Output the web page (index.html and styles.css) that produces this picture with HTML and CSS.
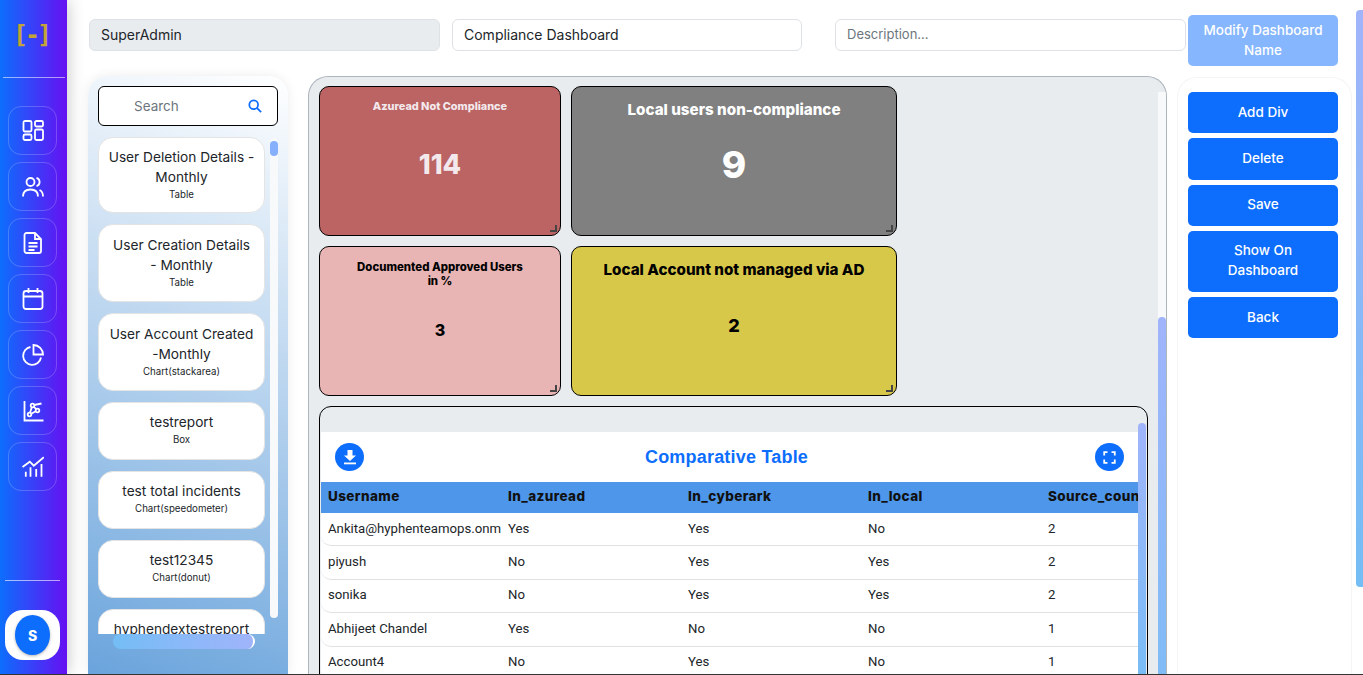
FILE: index.html
```html
<!DOCTYPE html>
<html lang="en">
<head>
    <meta charset="UTF-8">
    <meta name="viewport" content="width=device-width, initial-scale=1.0">
    <title>Compliance Dashboard</title>
    <link rel="stylesheet" href="styles.css">
</head>
<body>

    <!-- sidebar -->
    <aside class="sidebar">
        <div class="logo">[-]</div>
        <hr class="side-line">
        <nav class="nav-list">
            <a class="nav-item"><svg class="nav-icon" viewBox="0 0 22 22"><rect x="1.500" y="1" width="8" height="10.500" rx="1.500"/><rect x="1.500" y="14.500" width="8" height="5.500" rx="1.500"/><rect x="13" y="1" width="8" height="5.500" rx="1.500"/><rect x="13" y="9.500" width="8" height="10.500" rx="1.500"/></svg></a>
            <a class="nav-item"><svg class="nav-icon" viewBox="0 0 22 22"><circle cx="8.500" cy="6" r="4"/><path d="M1 20.500c0-4.500 3-7 7.500-7s7.500 2.500 7.500 7"/><path d="M14.500 1.800a4.400 4.400 0 0 1 0 8.400"/><path d="M17.500 14c2.300 1 3.500 3.200 3.500 6.500"/></svg></a>
            <a class="nav-item"><svg class="nav-icon" viewBox="0 0 22 22"><path d="M4.500 1h8.500l6 6v12a2 2 0 0 1-2 2H4.500a2 2 0 0 1-2-2V3a2 2 0 0 1 2-2z"/><path d="M13 1v6h6"/><path d="M6.500 11h9M6.500 14.500h9M6.500 18h6"/></svg></a>
            <a class="nav-item"><svg class="nav-icon" viewBox="0 0 22 22"><rect x="1.500" y="3" width="19" height="18" rx="2.500"/><path d="M1.500 8.500h19M6.500 0v5M15.500 0v5"/></svg></a>
            <a class="nav-item"><svg class="nav-icon" viewBox="0 0 22 22"><path d="M8.500 3a9 9 0 1 0 10.500 10.500"/><path d="M11.500 1a9.500 9.500 0 0 1 9.500 9.500h-9.500z"/></svg></a>
            <a class="nav-item"><svg class="nav-icon" viewBox="0 0 22 22"><path d="M2.500 1v19.500h19"/><circle cx="7.500" cy="14.500" r="1.800"/><circle cx="15.500" cy="10.500" r="1.800"/><circle cx="10.500" cy="5.500" r="1.800"/><path d="M9.200 13.700l4.600-2.400M12.200 5l7.300-1.500M11.800 6.800l2.500 2.400M8 12.800l1.800-5.500"/></svg></a>
            <a class="nav-item"><svg class="nav-icon" viewBox="0 0 22 22"><path d="M0.500 11l7.300-5.300 4 4L21.800 1.300"/><path d="M3.800 15.700v5M8.500 11.300v9.400M14.200 13v7.700M19.500 8v12.700"/></svg></a>
        </nav>
        <hr class="side-line user-line">
        <div class="user-box">
            <div class="user-avatar">S</div>
        </div>
    </aside>

    <main class="main">
        <div class="top-row">
            <div class="field field-disabled">SuperAdmin</div>
            <div class="field field-name">Compliance Dashboard</div>
            <div class="field field-desc">Description...</div>
            <button class="btn btn-faded">Modify Dashboard Name</button>
        </div>

        <div class="content-row">
            <!-- report list -->
            <section class="report-panel">
                <div class="search-box">
                    <span class="search-text">Search</span>
                    <svg class="search-icon" viewBox="0 0 16 16"><circle cx="6.500" cy="6.500" r="5"/><path d="M10.300 10.300L15 15"/></svg>
                </div>
                <div class="report-list">
                    <div class="report-card">
                        <div class="report-title">User Deletion Details -<br>Monthly</div>
                        <div class="report-type">Table</div>
                    </div>
                    <div class="report-card tall">
                        <div class="report-title">User Creation Details<br>- Monthly</div>
                        <div class="report-type">Table</div>
                    </div>
                    <div class="report-card tall">
                        <div class="report-title">User Account Created<br>-Monthly</div>
                        <div class="report-type">Chart(stackarea)</div>
                    </div>
                    <div class="report-card">
                        <div class="report-title">testreport</div>
                        <div class="report-type">Box</div>
                    </div>
                    <div class="report-card">
                        <div class="report-title">test total incidents</div>
                        <div class="report-type">Chart(speedometer)</div>
                    </div>
                    <div class="report-card">
                        <div class="report-title">test12345</div>
                        <div class="report-type">Chart(donut)</div>
                    </div>
                    <div class="report-card">
                        <div class="report-title">hyphendextestreport</div>
                        <div class="report-type">Box</div>
                    </div>
                </div>
                <div class="list-track"><div class="list-thumb"></div></div>
                <div class="list-hthumb"></div>
            </section>

            <!-- canvas -->
            <section class="canvas">
                <div class="box-grid">
                    <div class="box box-red">
                        <div class="box-title t-small">Azuread Not Compliance</div>
                        <div class="box-value v-114">114</div>
                    </div>
                    <div class="box box-grey">
                        <div class="box-title t-large">Local users non-compliance</div>
                        <div class="box-value v-9">9</div>
                    </div>
                    <div class="box box-pink">
                        <div class="box-title t-two">Documented Approved Users<br>in %</div>
                        <div class="box-value v-3">3</div>
                    </div>
                    <div class="box box-yellow">
                        <div class="box-title t-mid">Local Account not managed via AD</div>
                        <div class="box-value v-2">2</div>
                    </div>
                </div>

                <div class="table-box">
                    <div class="table-inner">
                        <div class="table-head">
                            <span class="round-btn">
                                <svg viewBox="0 0 16 16"><path class="solid" d="M5.500 1h5v5.500h3.500L8 12 2 6.500h3.500z"/><rect class="solid" x="2" y="13.500" width="12" height="1.800"/></svg>
                            </span>
                            <h2 class="table-title">Comparative Table</h2>
                            <span class="round-btn">
                                <svg class="expand" viewBox="0 0 16 16"><path class="corner" d="M1.500 5.500v-4h4M10.500 1.500h4v4M14.500 10.500v4h-4M5.500 14.500h-4v-4"/></svg>
                            </span>
                        </div>
                        <table class="data-table">
                            <thead>
                                <tr><th>Username</th><th>In_azuread</th><th>In_cyberark</th><th>In_local</th><th>Source_count</th></tr>
                            </thead>
                            <tbody>
                                <tr><td>Ankita@hyphenteamops.onmicrosoft.com</td><td>Yes</td><td>Yes</td><td>No</td><td>2</td></tr>
                                <tr><td>piyush</td><td>No</td><td>Yes</td><td>Yes</td><td>2</td></tr>
                                <tr><td>sonika</td><td>No</td><td>Yes</td><td>Yes</td><td>2</td></tr>
                                <tr><td>Abhijeet Chandel</td><td>Yes</td><td>No</td><td>No</td><td>1</td></tr>
                                <tr><td>Account4</td><td>No</td><td>Yes</td><td>No</td><td>1</td></tr>
                            </tbody>
                        </table>
                    </div>
                    <div class="table-thumb"></div>
                </div>

                <div class="canvas-track"><div class="canvas-thumb"></div></div>
            </section>

            <!-- actions -->
            <section class="action-panel">
                <button class="btn">Add Div</button>
                <button class="btn">Delete</button>
                <button class="btn">Save</button>
                <button class="btn btn-two">Show On Dashboard</button>
                <button class="btn">Back</button>
            </section>
        </div>
    </main>

    <div class="page-thumb"></div>

</body>
</html>
```

FILE: styles.css
```css
* {
    box-sizing: border-box;
}

html, body {
    height: 100%;
    margin: 0;
    overflow: hidden;
}

body {
    display: flex;
    height: 675px;
    background-color: #fff;
    border-bottom: 1px solid #333;
    font-family: "Inter", "Open Sans", sans-serif;
    color: #212529;
}

/* sidebar */
.sidebar {
    width: 67px;
    flex-shrink: 0;
    display: flex;
    flex-direction: column;
    align-items: center;
    background: linear-gradient(to right, #0d6efd, #6610f2);
    box-shadow: 0 0 16px rgba(0, 0, 0, 0.25);
    z-index: 5;
}

.logo {
    height: 77px;
    margin-right: 5px;
    padding-top: 20px;
    font-family: "DejaVu Sans Mono", monospace;
    font-size: 25px;
    line-height: 30px;
    font-weight: bold;
    letter-spacing: -3px;
    color: #c2a437;
}

.side-line {
    width: 62px;
    height: 1px;
    margin: 0;
    border: none;
    background-color: rgba(255, 255, 255, 0.55);
}

.nav-list {
    display: flex;
    flex-direction: column;
    gap: 7px;
    margin: 28px 2px 0 0;
}

.nav-item {
    display: flex;
    justify-content: center;
    align-items: center;
    width: 49px;
    height: 49px;
    border: 1px solid rgba(255, 255, 255, 0.2);
    border-radius: 13px;
}

.nav-icon {
    width: 22px;
    height: 22px;
    fill: none;
    stroke: #fff;
    stroke-width: 1.800;
}

.user-line {
    width: 55px;
    margin: auto 2px 0 0;
    background-color: rgba(255, 255, 255, 0.6);
}

.user-box {
    display: flex;
    justify-content: center;
    align-items: center;
    width: 55px;
    height: 50px;
    margin: 29px 2px 14px 0;
    background-color: #fff;
    border-radius: 18px;
}

.user-avatar {
    display: flex;
    justify-content: center;
    align-items: center;
    width: 35px;
    height: 40px;
    border-radius: 50%;
    background-color: #0d6efd;
    color: #fff;
    font-size: 14px;
    font-weight: 800;
    box-shadow: 0 1px 3px rgba(0, 0, 0, 0.3);
}

/* main */
.main {
    flex: 1;
    min-width: 0;
    display: flex;
    flex-direction: column;
    padding-top: 15px;
}

.top-row {
    display: flex;
    align-items: flex-start;
    height: 51px;
    margin-bottom: 10px;
    padding-left: 22px;
}

.field {
    height: 32px;
    margin-top: 4px;
    padding: 0 11px;
    border: 1px solid #dee2e6;
    border-radius: 6px;
    font-size: 14px;
    line-height: 30px;
    background-color: #fff;
}

.field-disabled {
    width: 351px;
    background-color: #e9ecef;
}

.field-name {
    width: 350px;
    margin-left: 12px;
}

.field-desc {
    width: 351px;
    margin-left: 33px;
    font-size: 13px;
    line-height: 28px;
    color: #6c757d;
}

.btn {
    display: block;
    width: 150px;
    height: 41.300px;
    padding: 0 12px 2px;
    border: none;
    border-radius: 5px;
    background-color: #0d6efd;
    color: #fff;
    font-family: inherit;
    font-size: 13.500px;
    line-height: 20px;
    font-weight: 500;
}

.btn-faded {
    height: 51px;
    margin-left: 2px;
    padding: 0 10px 2px;
    background-color: #86b6fe;
}

.btn-two {
    height: 61px;
}

.content-row {
    flex: 1;
    min-height: 0;
    display: flex;
    padding-left: 21px;
}

/* report list */
.report-panel {
    position: relative;
    width: 200px;
    padding: 10px 10px 0;
    border-radius: 20px 20px 0 0;
    background: linear-gradient(20deg, #6aa4dc, #ffffff);
    box-shadow: 0 0 12px rgba(0, 0, 0, 0.08);
}

.search-box {
    display: flex;
    align-items: center;
    height: 40px;
    padding: 0 15px 0 35px;
    border: 1px solid #000;
    border-radius: 6px;
    background-color: #fff;
}

.search-text {
    flex: 1;
    font-size: 13.500px;
    color: #6c757d;
}

.search-icon {
    width: 14px;
    height: 14px;
    fill: none;
    stroke: #0d6efd;
    stroke-width: 2;
}

.report-list {
    display: flex;
    flex-direction: column;
    gap: 11px;
    width: 167px;
    height: 497px;
    margin-top: 11px;
    overflow: hidden;
}

.report-card {
    flex-shrink: 0;
    min-height: 58px;
    padding: 9px 4px 10px;
    border: 1px solid #e4e4e4;
    border-radius: 15px;
    background-color: #fff;
    text-align: center;
}

.report-card.tall {
    min-height: 78px;
    padding-top: 10px;
}

.report-title {
    font-size: 13.700px;
    line-height: 20px;
}

.report-type {
    padding-top: 1px;
    font-size: 9.700px;
    line-height: 14px;
}

.list-track {
    position: absolute;
    top: 62px;
    left: 182px;
    width: 8px;
    height: 480px;
    border-radius: 4px;
    background-color: #f8f9fa;
}

.list-thumb {
    width: 8px;
    height: 15px;
    margin-top: 3px;
    border-radius: 4px;
    background-color: #86b0fb;
}

.list-hthumb {
    position: absolute;
    top: 558px;
    left: 25px;
    width: 142px;
    height: 15px;
    border-radius: 8px;
    border-right: 2px solid #fff;
    background: linear-gradient(to right, #74bdf5, #a0b4fb);
}

/* canvas */
.canvas {
    position: relative;
    width: 859px;
    margin-left: 20px;
    padding: 9px 10px 0;
    border: 1px solid #adb5bd;
    border-bottom: none;
    border-radius: 20px 20px 0 0;
    background-color: #e9ecef;
    overflow: hidden;
}

.box-grid {
    display: grid;
    grid-template-columns: 242px 326px;
    grid-auto-rows: 150px;
    gap: 10px;
}

.box {
    position: relative;
    display: flex;
    flex-direction: column;
    align-items: center;
    border: 1px solid #000;
    border-radius: 10px;
    text-align: center;
    font-weight: 800;
}

/* resize grip */
.box::after {
    content: "";
    position: absolute;
    right: 3px;
    bottom: 3px;
    width: 5px;
    height: 5px;
    border-right: 2px solid #444;
    border-bottom: 2px solid #444;
}

.box-red {
    background-color: #bc6464;
    color: #f3e9ec;
}

.box-grey {
    background-color: #808080;
    color: #fff;
}

.box-pink {
    background-color: #e8b4b4;
    color: #000;
}

.box-yellow {
    background-color: #d8c84a;
    color: #000;
}

.t-small {
    margin-top: 12px;
    font-size: 10.900px;
    line-height: 14px;
}

.t-large {
    margin-top: 13px;
    font-size: 15.200px;
    line-height: 20px;
}

.t-two {
    margin-top: 13px;
    font-size: 11.400px;
    line-height: 14px;
}

.t-mid {
    margin-top: 13px;
    font-size: 15.200px;
    line-height: 20px;
}

.v-114 {
    margin-top: 35px;
    font-size: 27px;
    line-height: 34px;
}

.v-9 {
    margin-top: 23px;
    font-size: 37px;
    line-height: 44px;
}

.v-3 {
    margin-top: 31px;
    font-size: 16px;
    line-height: 22px;
}

.v-2 {
    margin-top: 34px;
    font-size: 18px;
    line-height: 24px;
}

/* table box */
.table-box {
    position: relative;
    width: 829px;
    height: 290px;
    margin-top: 10px;
    padding: 25px 9px 0 1px;
    border: 1px solid #000;
    border-radius: 12px;
    overflow: hidden;
}

.table-inner {
    height: 100%;
    background-color: #fff;
    overflow: hidden;
}

.table-head {
    display: flex;
    justify-content: space-between;
    align-items: center;
    height: 50px;
    padding: 0 14px;
}

.round-btn {
    display: flex;
    justify-content: center;
    align-items: center;
    width: 29px;
    height: 28px;
    border-radius: 50%;
    background-color: #0d6efd;
}

.round-btn svg {
    width: 16px;
    height: 16px;
}

.round-btn .expand {
    width: 13px;
    height: 13px;
}

.solid {
    fill: #fff;
}

.corner {
    fill: none;
    stroke: #fff;
    stroke-width: 2.200;
}

.table-title {
    margin: 0 6px 0 0;
    font-family: "Liberation Sans", sans-serif;
    font-size: 18px;
    font-weight: 700;
    letter-spacing: 0.200px;
    color: #0d6efd;
}

.data-table {
    width: 900px;
    table-layout: fixed;
    border-collapse: separate;
    border-spacing: 0;
}

.data-table th {
    height: 31px;
    padding: 0 7px 3px;
    background-color: #4d96e9;
    text-align: left;
    font-size: 13.500px;
    font-weight: 800;
    letter-spacing: 0.400px;
    color: #111;
    white-space: nowrap;
    overflow: hidden;
}

.data-table td {
    height: 33.400px;
    padding: 0 7px 2px;
    border-bottom: 1px solid #dfe1e3;
    font-family: "Roboto", sans-serif;
    font-size: 13.200px;
    white-space: nowrap;
    overflow: hidden;
}

.data-table td:first-child {
    border-bottom-left-radius: 10px;
}

.table-thumb {
    position: absolute;
    top: 16px;
    right: 1px;
    width: 8px;
    height: 280px;
    border-radius: 4px 4px 0 0;
    background: linear-gradient(to bottom, #a0b4fb, #74bdf5);
}

.canvas-track {
    position: absolute;
    top: 15px;
    right: 0;
    width: 8px;
    height: 590px;
    background-color: #f8f9fa;
}

.canvas-thumb {
    width: 8px;
    height: 360px;
    margin-top: 225px;
    border-radius: 4px 4px 0 0;
    background: linear-gradient(to bottom, #a0b4fb, #80bcf6);
}

/* actions */
.action-panel {
    display: flex;
    flex-direction: column;
    gap: 5px;
    width: 175px;
    margin: 1px 0 0 10px;
    padding: 14px 10px 0;
    border: 1px solid #f5f5f5;
    border-bottom: none;
    border-radius: 20px 20px 0 0;
}

.page-thumb {
    position: fixed;
    top: 10px;
    right: 0;
    width: 7px;
    height: 577px;
    border-radius: 4px 0 0 4px;
    background: linear-gradient(to bottom, #a0b4fb, #74bdf5);
}
```
